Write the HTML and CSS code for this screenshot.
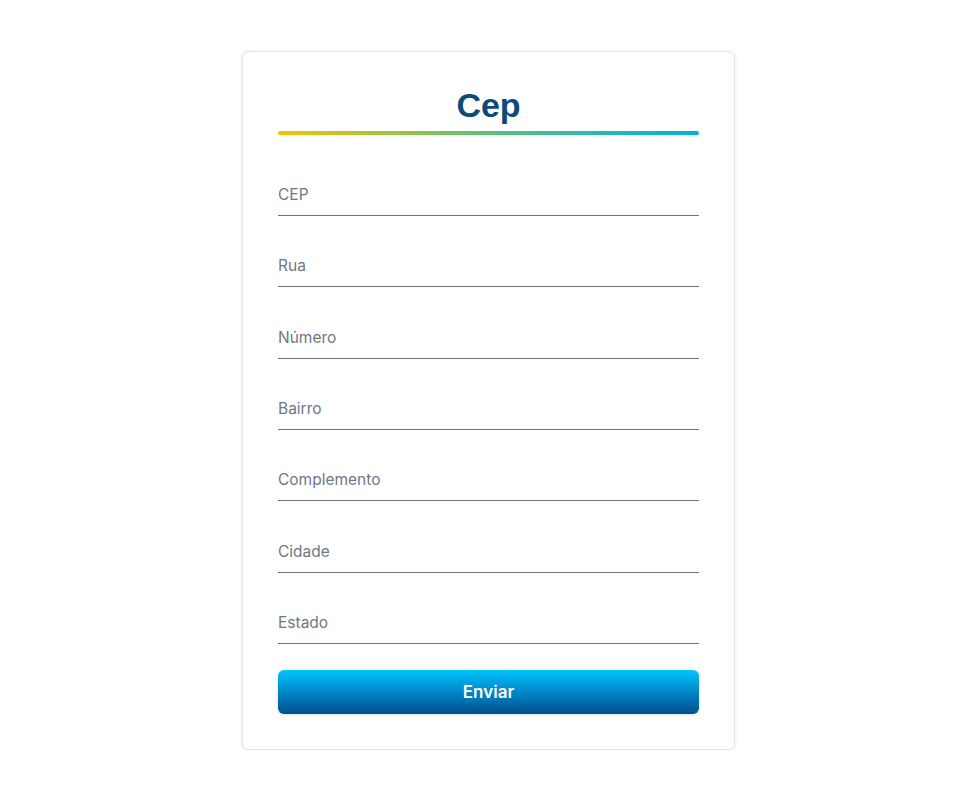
FILE: index.html
```html
<!DOCTYPE html>
<html lang="pt-BR">
<head>
<meta charset="utf-8">
<title>Cep</title>
<link rel="stylesheet" href="styles.css">
</head>
<body>
<main class="page">
  <form class="card">
    <h1 class="title">Cep</h1>
    <div class="title-bar"></div>
    <div class="fields">
      <input class="field" type="text" placeholder="CEP">
      <input class="field" type="text" placeholder="Rua">
      <input class="field" type="text" placeholder="Número">
      <input class="field" type="text" placeholder="Bairro">
      <input class="field" type="text" placeholder="Complemento">
      <input class="field" type="text" placeholder="Cidade">
      <input class="field" type="text" placeholder="Estado">
    </div>
    <button class="submit" type="button">Enviar</button>
  </form>
</main>
</body>
</html>
```
FILE: styles.css
```css
* { box-sizing: border-box; }
html, body { margin: 0; background: #ffffff; }
body { font-family: Inter, "Noto Sans", sans-serif; }
.page {
  display: flex;
  justify-content: center;
  padding: 51px 0 0 24px;
}
.card {
  width: 493px;
  height: 699px;
  background: #ffffff;
  border: 1px solid #e3e3e3;
  border-radius: 6px;
  box-shadow: 0 1px 4px rgba(0,0,0,0.08);
  padding: 33px 35px 35px;
  display: flex;
  flex-direction: column;
}
.title {
  margin: 0;
  text-align: center;
  font-family: "Liberation Sans", Arial, sans-serif;
  font-weight: 700;
  font-size: 34px;
  line-height: 40px;
  color: #0b4a7a;
}
.title-bar {
  margin-top: 6px;
  height: 4px;
  border-radius: 2px;
  background: linear-gradient(90deg, #f2c600 0%, #5fbd7e 50%, #00b2df 100%);
  box-shadow: 0 1px 2px rgba(0,0,0,0.08);
}
.fields {
  margin-top: 41px;
  display: flex;
  flex-direction: column;
  gap: 31.33px;
}
.field {
  display: block;
  width: 100%;
  height: 40px;
  border: none;
  border-bottom: 1px solid #6b7480;
  padding: 0 0 2px;
  font-family: Inter, "Noto Sans", sans-serif;
  font-size: 15.5px;
  color: #333;
  background: transparent;
  outline: none;
}
.field::placeholder { color: #6f7785; opacity: 1; }
.submit {
  margin-top: 26px;
  height: 44px;
  flex-shrink: 0;
  width: 100%;
  border: none;
  border-radius: 6px;
  background: linear-gradient(180deg, #00c4ff 0%, #0087c8 50%, #004f8c 100%);
  color: #ffffff;
  font-family: Inter, "Noto Sans", sans-serif;
  font-weight: 600;
  font-size: 17px;
  box-shadow: 0 1px 3px rgba(0,0,0,0.12);
  cursor: pointer;
}
```
